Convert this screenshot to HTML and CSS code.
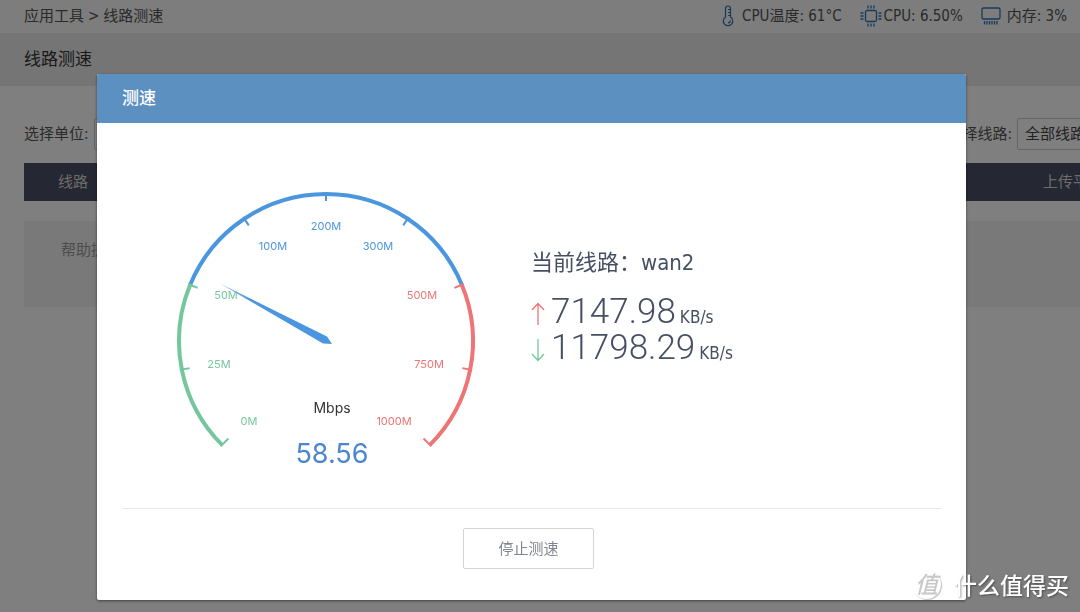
FILE: index.html
```html
<!DOCTYPE html>
<html lang="zh-CN">
<head>
<meta charset="utf-8">
<meta name="viewport" content="width=device-width, initial-scale=1">
<title>线路测速</title>
<link rel="stylesheet" href="styles.css">
</head>
<body>
<div class="page">
  <header class="topbar">
    <nav class="crumbs"><span>应用工具</span><span>&gt;</span><span>线路测速</span></nav>
    <div class="stats">
      <span class="stat stat-temp">
        <svg class="icon" width="12" height="22" viewBox="0 0 12 22" fill="none" stroke="currentColor" stroke-width="1.2"><path d="M3.500 12V3.500a2.500 2.500 0 0 1 5 0V12a4.700 4.700 0 1 1-5 0z"/><path d="M6 4.500h2.500M6 7.500h2.500M6 10.500h2.500M8.300 15.500a2.300 2.300 0 0 1-2.300 2.300"/></svg>
        CPU温度: 61°C
      </span>
      <span class="stat stat-cpu">
        <svg class="icon" width="22" height="22" viewBox="0 0 22 22" fill="none" stroke="currentColor" stroke-width="1.3"><rect x="5.500" y="5.500" width="11" height="11" rx="1.500"/><path d="M8 0.500v3M11 0.500v3M14 0.500v3M8 18.500v3M11 18.500v3M14 18.500v3M0.500 8h3M0.500 11h3M0.500 14h3M18.500 8h3M18.500 11h3M18.500 14h3"/></svg>
        CPU: 6.50%
      </span>
      <span class="stat stat-mem">
        <svg class="icon" width="20" height="18" viewBox="0 0 20 18" fill="none" stroke="currentColor" stroke-width="1.3"><rect x="1" y="1" width="18" height="11" rx="1.500"/><path d="M3.500 14v3.500M6 14v3.500M8.500 14v3.500M11 14v3.500M13.500 14v3.500M16 14v3.500"/></svg>
        内存: 3%
      </span>
    </div>
  </header>
  <h1 class="page-title">线路测速</h1>
  <main class="content">
    <div class="filters">
      <div class="field"><label for="unit">选择单位:</label><select id="unit" class="select"><option>KB/s</option></select></div>
      <div class="field"><label for="line">选择线路:</label><select id="line" class="select"><option>全部线路</option></select></div>
    </div>
    <table class="lines">
      <thead><tr><th class="col-line">线路</th><th class="col-gap"></th><th class="col-up">上传平均</th></tr></thead>
    </table>
    <p class="help">帮助提示</p>
  </main>
</div>

<div class="backdrop">
  <section class="dialog" role="dialog" aria-modal="true" aria-labelledby="dialog-title">
    <h2 class="dialog-head" id="dialog-title">测速</h2>
    <div class="dialog-body">
      <svg class="gauge" width="302" height="284" viewBox="0 0 302 284">
        <g fill="none" stroke-width="4">
          <path class="green-line" d="M47.060 254.940A147 147 0 0 1 15.190 94.750"/>
          <path class="blue-line" d="M15.190 94.750A147 147 0 0 1 286.810 94.750"/>
          <path class="red-line" d="M286.810 94.750A147 147 0 0 1 254.940 254.940"/>
        </g>
        <g fill="none" stroke-width="2">
          <path class="green-line" d="M45.640 256.360L53.420 248.580M4.860 180.070L14.670 178.120M13.340 93.980L22.580 97.810"/>
          <path class="blue-line" d="M68.220 27.110L73.780 35.430M151 2V11M233.780 27.110L228.220 35.430"/>
          <path class="red-line" d="M288.660 93.980L279.420 97.810M297.140 180.070L287.330 178.120M256.360 256.360L248.580 248.580"/>
        </g>
        <defs><linearGradient id="needle" x1="0" y1="0" x2="1" y2="0"><stop offset="0" stop-color="#a9caee"/><stop offset="0.250" stop-color="#4b96df"/></linearGradient></defs>
        <g class="scale">
          <text class="green-text" x="74" y="235">0M</text>
          <text class="green-text" x="44" y="178">25M</text>
          <text class="green-text" x="51" y="109">50M</text>
          <text class="blue-text" x="98" y="60">100M</text>
          <text class="blue-text" x="151" y="40">200M</text>
          <text class="blue-text" x="203" y="60">300M</text>
          <text class="red-text" x="247" y="109">500M</text>
          <text class="red-text" x="254" y="178">750M</text>
          <text class="red-text" x="219" y="235">1000M</text>
        </g>
        <path fill="url(#needle)" d="M44 93L152 146.500L157 154L148 153.500Z"/>
        <text class="gauge-unit" x="157" y="223">Mbps</text>
        <text class="gauge-value" x="157" y="273">58.56</text>
      </svg>
      <div class="info">
        <p class="current">当前线路：wan2</p>
        <p class="speed">
          <svg class="arrow up" width="14" height="24" viewBox="0 0 14 24"><path d="M7 23V2M1 8L7 1.500L13 8"/></svg>
          <span class="number">7147.98</span><span class="unit">KB/s</span>
        </p>
        <p class="speed">
          <svg class="arrow down" width="14" height="24" viewBox="0 0 14 24"><path d="M7 1V22M1 16L7 22.500L13 16"/></svg>
          <span class="number">11798.29</span><span class="unit">KB/s</span>
        </p>
      </div>
    </div>
    <footer class="dialog-foot"><button type="button" class="stop">停止测速</button></footer>
  </section>
</div>

<div class="watermark"><span class="mark">值</span><span>什么值得买</span></div>
</body>
</html>
```
FILE: styles.css
```css
* { box-sizing: border-box; }
body {
  margin: 0;
  background: #fff;
  color: #555;
  font: 15px/20px "DejaVu Sans Condensed", "Noto Sans CJK SC", sans-serif;
}
h1, h2, p { margin: 0; font-weight: 400; }
.page { min-height: 100vh; overflow: hidden; }

.topbar {
  display: flex;
  align-items: center;
  justify-content: space-between;
  height: 33px;
  padding: 0 13px 1px 24px;
  background: #fafafa;
}
.crumbs { display: flex; gap: 4px; }
.stats { display: flex; gap: 18px; }
.stat { display: flex; align-items: center; white-space: nowrap; }
.stat-temp { gap: 8px; }
.stat-cpu { gap: 2px; }
.stat-mem { gap: 6px; }
.icon { color: #2f74b8; flex: none; }

.page-title {
  padding: 14px 24px 15px;
  background: #ebebeb;
  color: #333;
  font-size: 17px;
  line-height: 24px;
}
.content { width: calc(100% + 137px); padding: 32px 0 0 24px; }
.filters { display: flex; justify-content: space-between; }
.field { display: flex; align-items: center; gap: 5px; }
.select {
  width: 200px;
  height: 32px;
  padding: 0 7px 1px;
  border: 1px solid #ccc;
  border-radius: 2px;
  background: #fff;
  color: #444;
  font: inherit;
  appearance: none;
}
.lines {
  width: 100%;
  margin-top: 13px;
  border-collapse: collapse;
  table-layout: fixed;
  background: #4b4f64;
  color: #d8d8d8;
}
.lines th { height: 38px; padding: 0; font-weight: 400; }
.lines .col-line { width: 98px; }
.lines .col-up { width: 174px; text-align: left; }
.help {
  height: 86px;
  margin-top: 20px;
  padding: 19px 37px;
  background: #f3f3f3;
  color: #999;
}

.backdrop {
  position: fixed;
  inset: 0;
  padding: 74px 114px 12px 97px;
  background: rgba(0, 0, 0, 0.5);
}
.dialog {
  border-radius: 2px;
  background: #fff;
  box-shadow: 0 1px 3px rgba(0, 0, 0, 0.5);
  overflow: hidden;
}
.dialog-head {
  padding: 12px 25px 13px;
  background: #5c90c1;
  color: #fff;
  font-size: 17px;
  font-weight: 500;
  line-height: 24px;
}
.dialog-body {
  display: flex;
  align-items: flex-start;
  gap: 54px;
  padding: 67px 25px 34px 78px;
}
.gauge { flex: none; }
.green-line { stroke: #74c69d; }
.blue-line { stroke: #4b96df; }
.red-line { stroke: #ee7475; }
.green-text { fill: #74c69d; }
.blue-text { fill: #4b96df; }
.red-text { fill: #ee7475; }
.gauge text { font-family: Inter, "Liberation Sans", sans-serif; text-anchor: middle; }
.gauge .scale text { font-size: 11px; }
.gauge .gauge-unit { fill: #333; font-size: 14px; }
.gauge .gauge-value { fill: #4c86d0; font-size: 27px; }

.info { padding-top: 57px; color: #475063; }
.current { margin-bottom: 15px; font-size: 22px; line-height: 32px; }
.speed { display: flex; align-items: baseline; height: 36px; }
.number { margin: 0 4px 0 6px; font: 300 35px/36px Roboto, sans-serif; }
.unit { font-size: 17px; line-height: 20px; }
.arrow { align-self: center; margin-top: 4px; fill: none; stroke-width: 1.3; }
.up { stroke: #ee7475; }
.down { stroke: #74c69d; }

.dialog-foot {
  display: flex;
  justify-content: center;
  margin: 0 25px;
  padding: 19px 6px 31px 0;
  border-top: 1px solid #e8e8e8;
}
.stop {
  padding: 9px 34px 8px;
  border: 1px solid #d2d4d7;
  border-radius: 2px;
  background: #fff;
  color: #80868d;
  font-family: inherit;
  font-size: 15px;
  line-height: 22px;
}

.watermark {
  position: fixed;
  right: 11px;
  bottom: 12px;
  display: flex;
  align-items: center;
  gap: 13px;
  color: #fff;
  font: 500 23px/32px "Noto Sans CJK SC", sans-serif;
  text-shadow: 1px 1px 2px rgba(0, 0, 0, 0.4);
}
.mark {
  width: 29px;
  height: 29px;
  border-radius: 50%;
  box-shadow: 1px 1px 1px rgba(0, 0, 0, 0.25);
  color: #c8c8c8;
  font-style: italic;
  line-height: 27px;
  text-align: center;
  text-shadow: none;
}
```
